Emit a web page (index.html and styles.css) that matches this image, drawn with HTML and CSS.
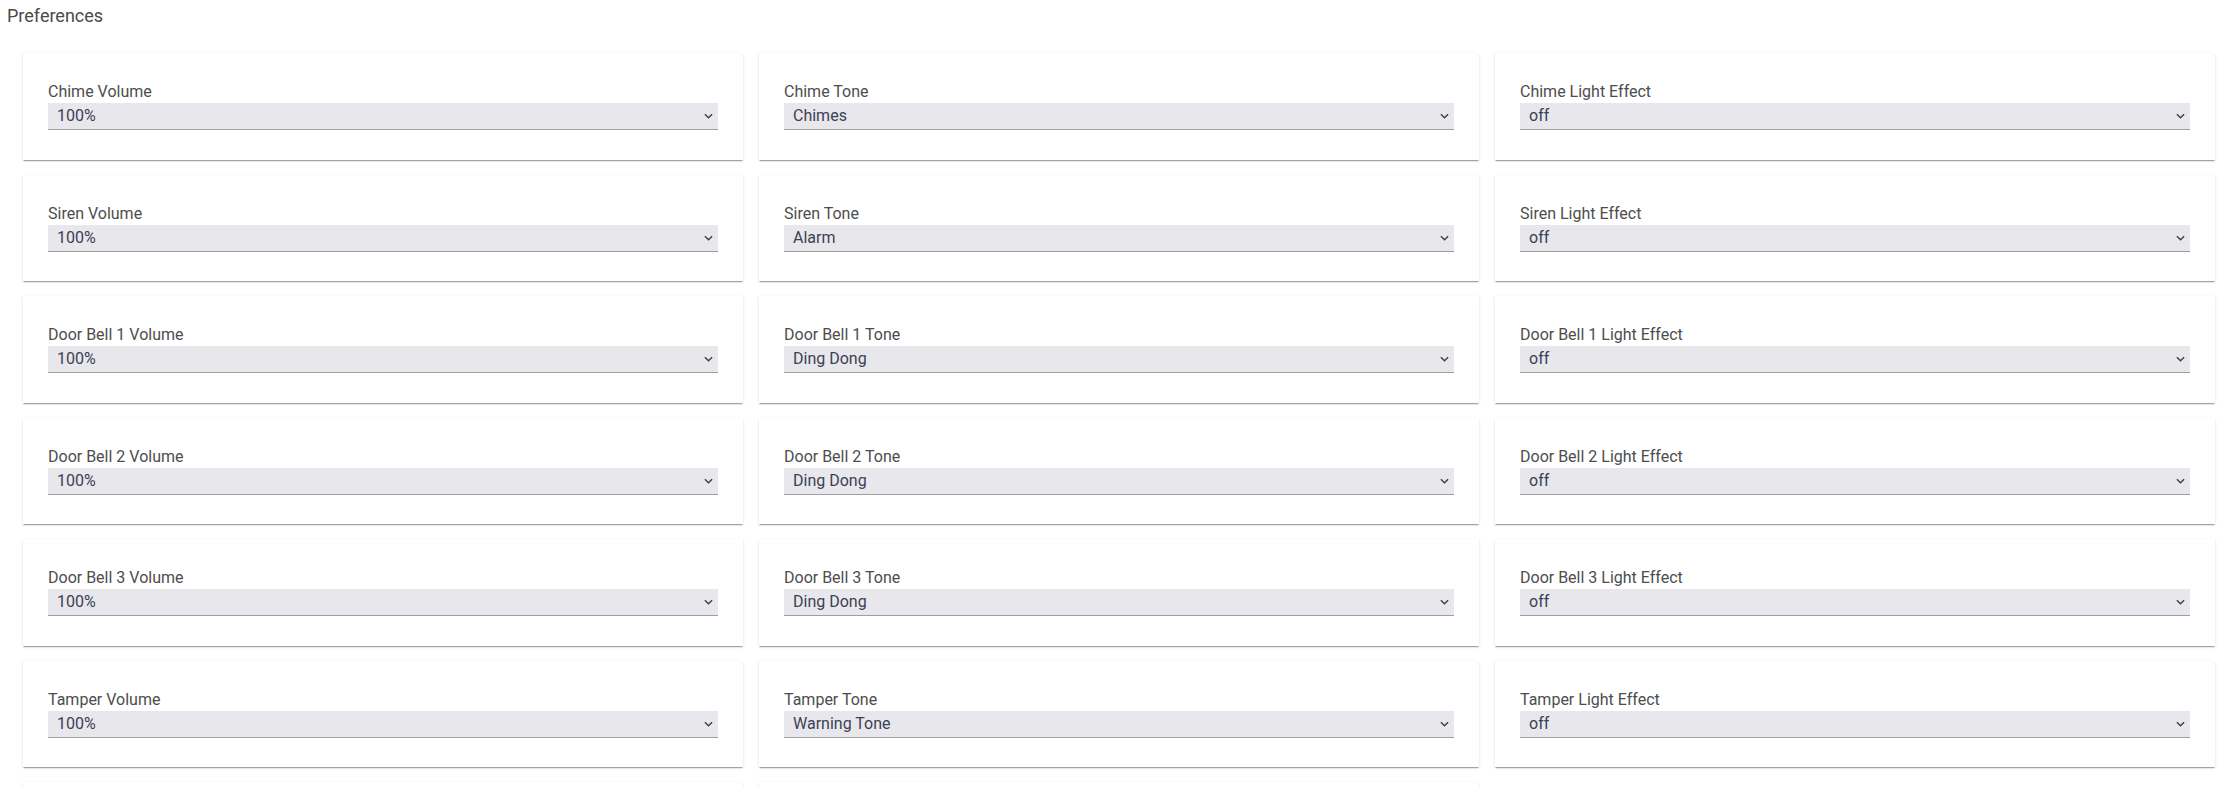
FILE: index.html
```html
<!DOCTYPE html>
<html>
<head>
<meta charset="utf-8">
<link rel="stylesheet" href="styles.css">
</head>
<body>
<div class="page-title">Preferences</div>
<div class="grid">
  <div class="card"><div class="label">Chime Volume</div><div class="field"><span class="value">100%</span><svg class="chev" viewBox="0 0 10 6"><path d="M1 1l4 4 4-4"/></svg></div></div>
  <div class="card"><div class="label">Chime Tone</div><div class="field"><span class="value">Chimes</span><svg class="chev" viewBox="0 0 10 6"><path d="M1 1l4 4 4-4"/></svg></div></div>
  <div class="card"><div class="label">Chime Light Effect</div><div class="field"><span class="value">off</span><svg class="chev" viewBox="0 0 10 6"><path d="M1 1l4 4 4-4"/></svg></div></div>

  <div class="card"><div class="label">Siren Volume</div><div class="field"><span class="value">100%</span><svg class="chev" viewBox="0 0 10 6"><path d="M1 1l4 4 4-4"/></svg></div></div>
  <div class="card"><div class="label">Siren Tone</div><div class="field"><span class="value">Alarm</span><svg class="chev" viewBox="0 0 10 6"><path d="M1 1l4 4 4-4"/></svg></div></div>
  <div class="card"><div class="label">Siren Light Effect</div><div class="field"><span class="value">off</span><svg class="chev" viewBox="0 0 10 6"><path d="M1 1l4 4 4-4"/></svg></div></div>

  <div class="card"><div class="label">Door Bell 1 Volume</div><div class="field"><span class="value">100%</span><svg class="chev" viewBox="0 0 10 6"><path d="M1 1l4 4 4-4"/></svg></div></div>
  <div class="card"><div class="label">Door Bell 1 Tone</div><div class="field"><span class="value">Ding Dong</span><svg class="chev" viewBox="0 0 10 6"><path d="M1 1l4 4 4-4"/></svg></div></div>
  <div class="card"><div class="label">Door Bell 1 Light Effect</div><div class="field"><span class="value">off</span><svg class="chev" viewBox="0 0 10 6"><path d="M1 1l4 4 4-4"/></svg></div></div>

  <div class="card"><div class="label">Door Bell 2 Volume</div><div class="field"><span class="value">100%</span><svg class="chev" viewBox="0 0 10 6"><path d="M1 1l4 4 4-4"/></svg></div></div>
  <div class="card"><div class="label">Door Bell 2 Tone</div><div class="field"><span class="value">Ding Dong</span><svg class="chev" viewBox="0 0 10 6"><path d="M1 1l4 4 4-4"/></svg></div></div>
  <div class="card"><div class="label">Door Bell 2 Light Effect</div><div class="field"><span class="value">off</span><svg class="chev" viewBox="0 0 10 6"><path d="M1 1l4 4 4-4"/></svg></div></div>

  <div class="card"><div class="label">Door Bell 3 Volume</div><div class="field"><span class="value">100%</span><svg class="chev" viewBox="0 0 10 6"><path d="M1 1l4 4 4-4"/></svg></div></div>
  <div class="card"><div class="label">Door Bell 3 Tone</div><div class="field"><span class="value">Ding Dong</span><svg class="chev" viewBox="0 0 10 6"><path d="M1 1l4 4 4-4"/></svg></div></div>
  <div class="card"><div class="label">Door Bell 3 Light Effect</div><div class="field"><span class="value">off</span><svg class="chev" viewBox="0 0 10 6"><path d="M1 1l4 4 4-4"/></svg></div></div>

  <div class="card"><div class="label">Tamper Volume</div><div class="field"><span class="value">100%</span><svg class="chev" viewBox="0 0 10 6"><path d="M1 1l4 4 4-4"/></svg></div></div>
  <div class="card"><div class="label">Tamper Tone</div><div class="field"><span class="value">Warning Tone</span><svg class="chev" viewBox="0 0 10 6"><path d="M1 1l4 4 4-4"/></svg></div></div>
  <div class="card"><div class="label">Tamper Light Effect</div><div class="field"><span class="value">off</span><svg class="chev" viewBox="0 0 10 6"><path d="M1 1l4 4 4-4"/></svg></div></div>

  <div class="card"></div>
  <div class="card"></div>
</div>
</body>
</html>
```

FILE: styles.css
```css
html, body {
  margin: 0;
  padding: 0;
  background: #ffffff;
  font-family: Roboto, "Liberation Sans", sans-serif;
}

.page-title {
  font-size: 18px;
  line-height: 21px;
  color: #4a4a4a;
  padding: 5px 0 0 7px;
  height: 53px;
  box-sizing: border-box;
}

.grid {
  display: grid;
  grid-template-columns: repeat(3, 720px);
  column-gap: 16px;
  row-gap: 15px;
  padding: 0 16px 40px 23px;
}

.card {
  background: #ffffff;
  box-shadow: 0 2px 1px -1px rgba(0, 0, 0, 0.22), 0 1px 1px 0 rgba(0, 0, 0, 0.12), 0 1px 3px 0 rgba(0, 0, 0, 0.10);
  padding: 29px 25px 30px 25px;
  height: 106.5px;
  box-sizing: border-box;
}

.label {
  font-size: 16px;
  line-height: 19px;
  color: #4d4d4d;
  margin-bottom: 2px;
}

.field {
  position: relative;
  display: flex;
  align-items: center;
  height: 26px;
  background: #e8e8ec;
  border-bottom: 1px solid #9e9ea4;
  padding: 0 8px 0 9px;
}

.value {
  font-size: 16px;
  line-height: 19px;
  color: #3c4054;
  margin-top: -1px;
}

.chev {
  position: absolute;
  right: 5px;
  top: 10px;
  width: 9px;
  height: 6px;
  fill: none;
  stroke: #3c4054;
  stroke-width: 1.6;
}
```
